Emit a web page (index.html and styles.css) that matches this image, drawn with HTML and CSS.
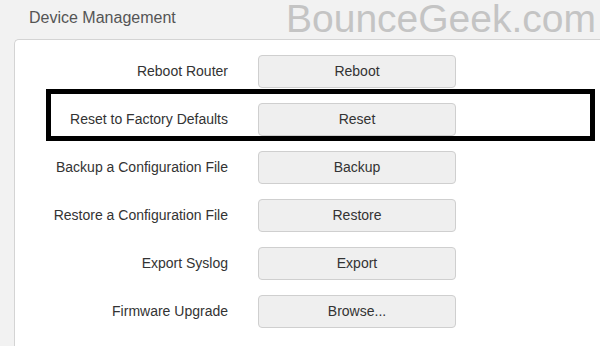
FILE: index.html
```html
<!DOCTYPE html>
<html lang="en">
<head>
    <meta charset="UTF-8">
    <meta name="viewport" content="width=device-width, initial-scale=1.0">
    <title>Device Management</title>
    <link rel="stylesheet" href="styles.css">
</head>
<body>
    <div class="header">
        <h2 class="title">Device Management</h2>
        <div class="watermark">BounceGeek.com</div>
    </div>
    <div class="panel">
        <div class="row">
            <span class="label">Reboot Router</span>
            <button class="button">Reboot</button>
        </div>
        <div class="row">
            <span class="label">Reset to Factory Defaults</span>
            <button class="button">Reset</button>
        </div>
        <div class="row">
            <span class="label">Backup a Configuration File</span>
            <button class="button">Backup</button>
        </div>
        <div class="row">
            <span class="label">Restore a Configuration File</span>
            <button class="button">Restore</button>
        </div>
        <div class="row">
            <span class="label">Export Syslog</span>
            <button class="button">Export</button>
        </div>
        <div class="row">
            <span class="label">Firmware Upgrade</span>
            <button class="button">Browse...</button>
        </div>
    </div>
    <!-- annotation drawn over the reset row -->
    <div class="highlight"></div>
</body>
</html>
```
FILE: styles.css
```css
html, body {
    height: 100%;
}

body {
    font-family: 'Liberation Sans', Arial, sans-serif;
    margin: 0;
    background-color: #f2f2f2;
    overflow: hidden;
    position: relative;
    display: flex;
    flex-direction: column;
}

.header {
    display: flex;
    justify-content: space-between;
    align-items: flex-start;
    height: 39px;
    flex-shrink: 0;
}

.title {
    margin: 9px 0 0 29px;
    font-size: 16px;
    line-height: 18px;
    font-weight: normal;
    color: #555;
}

.watermark {
    margin: 0 4px 0 0;
    font-size: 39px;
    line-height: 38px;
    color: #c4c4c4;
}

.panel {
    flex: 1;
    margin-left: 14px;
    background-color: #fff;
    border: 1px solid #d4d4d4;
    border-right: none;
    border-bottom: none;
    border-top-left-radius: 5px;
    padding-top: 15px;
    display: flex;
    flex-direction: column;
    gap: 15px;
    overflow: hidden;
}

.row {
    display: grid;
    grid-template-columns: 213px 198px;
    column-gap: 30px;
    align-items: center;
}

.label {
    text-align: right;
    font-size: 14px;
    line-height: 16px;
    margin-top: -2px;
    color: #333;
}

.button {
    height: 33px;
    padding: 0 0 2px;
    font-family: inherit;
    font-size: 14px;
    color: #333;
    background-color: #efefef;
    border: 1px solid #cfcfcf;
    border-radius: 4px;
}

.highlight {
    position: absolute;
    left: 46px;
    top: 89px;
    width: 539px;
    height: 42px;
    border: 5px solid #000;
}
```
